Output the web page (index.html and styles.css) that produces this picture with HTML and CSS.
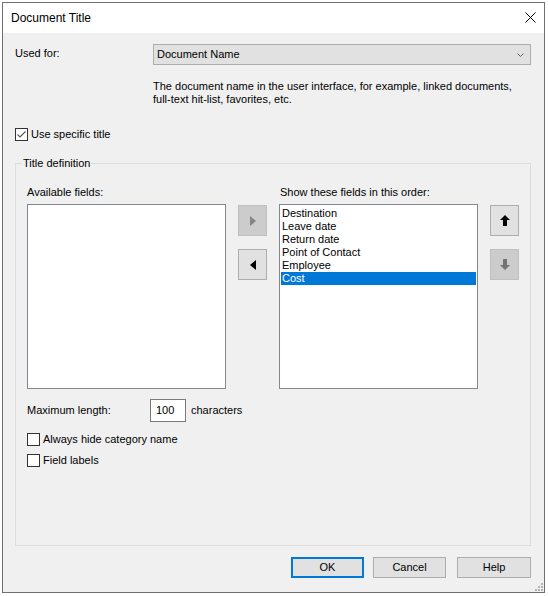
FILE: index.html
```html
<!DOCTYPE html>
<html lang="en">
<head>
<meta charset="utf-8">
<title>Document Title</title>
<link rel="stylesheet" href="styles.css">
</head>
<body>
<div class="window">
  <div class="titlebar">
    <span class="title">Document Title</span>
    <svg class="close" width="11" height="11" viewBox="0 0 11 11"><path d="M0.5 0.5 L10.5 10.5 M10.5 0.5 L0.5 10.5" stroke="#000" stroke-width="1" fill="none"/></svg>
  </div>
  <div class="body">
    <div class="row-used">
      <span class="label-used">Used for:</span>
      <div class="combo">
        <span>Document Name</span>
        <svg width="7" height="4" viewBox="0 0 7 4"><path d="M0.5 0.5 L3.5 3.5 L6.5 0.5" stroke="#606060" stroke-width="1" fill="none"/></svg>
      </div>
    </div>
    <p class="desc">The document name in the user interface, for example, linked documents, full-text hit-list, favorites, etc.</p>
    <label class="check check-top">
      <span class="box"><svg width="11" height="11" viewBox="0 0 11 11"><path d="M1.5 5.5 L4 8 L9.5 2.5" stroke="#555" stroke-width="1.1" fill="none"/></svg></span>
      <span>Use specific title</span>
    </label>
    <fieldset class="group">
      <legend>Title definition</legend>
      <div class="lists">
        <div class="col-label">Available fields:</div>
        <div class="col-label col-right">Show these fields in this order:</div>
        <div class="listbox"></div>
        <div class="btncol">
          <button class="sq disabled" type="button"><svg width="6" height="10" viewBox="0 0 6 10"><path d="M0 0 L6 5 L0 10 Z" fill="#858585"/></svg></button>
          <button class="sq" type="button"><svg width="6" height="10" viewBox="0 0 6 10"><path d="M6 0 L0 5 L6 10 Z" fill="#000"/></svg></button>
        </div>
        <ul class="listbox">
          <li>Destination</li>
          <li>Leave date</li>
          <li>Return date</li>
          <li>Point of Contact</li>
          <li>Employee</li>
          <li class="selected">Cost</li>
        </ul>
        <div class="btncol">
          <button class="sq" type="button"><svg width="10" height="11" viewBox="0 0 10 11"><path d="M5 0 L10 5 L7 5 L7 11 L3 11 L3 5 L0 5 Z" fill="#000"/></svg></button>
          <button class="sq disabled" type="button"><svg width="10" height="11" viewBox="0 0 10 11"><path d="M5 11 L10 6 L7 6 L7 0 L3 0 L3 6 L0 6 Z" fill="#737373"/></svg></button>
        </div>
      </div>
      <div class="maxrow">
        <span class="max-label">Maximum length:</span>
        <span class="input">100</span>
        <span class="unit">characters</span>
      </div>
      <label class="check check-a">
        <span class="box"></span>
        <span>Always hide category name</span>
      </label>
      <label class="check check-b">
        <span class="box"></span>
        <span>Field labels</span>
      </label>
    </fieldset>
    <div class="actions">
      <button class="btn default" type="button">OK</button>
      <button class="btn cancel" type="button">Cancel</button>
      <button class="btn help" type="button">Help</button>
    </div>
    <svg class="grip" width="9" height="8" viewBox="0 0 9 8">
      <rect x="7" y="0" width="2" height="2" fill="#b4b4b4"/>
      <rect x="4" y="3" width="2" height="2" fill="#b4b4b4"/>
      <rect x="7" y="3" width="2" height="2" fill="#b4b4b4"/>
      <rect x="1" y="6" width="2" height="2" fill="#b4b4b4"/>
      <rect x="4" y="6" width="2" height="2" fill="#b4b4b4"/>
      <rect x="7" y="6" width="2" height="2" fill="#b4b4b4"/>
    </svg>
  </div>
</div>
</body>
</html>
```
FILE: styles.css
```css
* { box-sizing: border-box; }
html, body { margin: 0; padding: 0; background: #ffffff; }
body {
  font-family: "Liberation Sans", Arial, sans-serif;
  font-size: 11px;
  line-height: 13px;
  color: #000;
}
.window {
  margin: 2px;
  width: 543px;
  height: 591px;
  border: 1px solid #707070;
  display: flex;
  flex-direction: column;
  background: #f0f0f0;
}
.titlebar {
  height: 30px;
  flex: none;
  background: #ffffff;
  display: flex;
  align-items: center;
  justify-content: space-between;
  padding: 0 8px 0 8px;
}
.title { font-size: 12px; line-height: 14px; }
.close { margin-bottom: 2px; }
.body {
  flex: 1;
  position: relative;
  display: flex;
  flex-direction: column;
  padding: 11px 13px 14px 12px;
}
.row-used { display: flex; align-items: flex-start; height: 21px; }
.label-used { width: 138px; padding-top: 3px; }
.combo {
  flex: 1;
  height: 21px;
  border: 1px solid #adadad;
  background: #e1e1e1;
  display: flex;
  align-items: center;
  justify-content: space-between;
  padding: 0 6px 0 3px;
}
.desc { margin: 15px 0 0 138px; line-height: 13px; }
.check { display: flex; align-items: center; height: 13px; }
.box {
  width: 13px;
  height: 13px;
  border: 1px solid #333333;
  background: #ffffff;
  display: flex;
  align-items: center;
  justify-content: center;
  margin-right: 3px;
}
.check-top { margin-top: 22px; }
.group {
  flex: 1;
  min-width: 0;
  min-height: 0;
  margin: 16px 0 0 0;
  padding: 16px 11px 0 11px;
  border: 1px solid #dcdcdc;
}
.group legend {
  padding: 0 1px;
  margin-left: -5px;
  line-height: 13px;
}
.lists {
  display: grid;
  grid-template-columns: 199px 29px 199px 29px;
  grid-template-rows: 13px 185px;
  column-gap: 12px;
  row-gap: 5px;
}
.col-label { grid-row: 1; grid-column: 1; white-space: nowrap; }
.col-label.col-right { grid-column: 3; padding-left: 1px; }
.listbox {
  grid-row: 2;
  margin: 0;
  padding: 2px 1px 1px 1px;
  list-style: none;
  border: 1px solid #828790;
  background: #ffffff;
}
.listbox li { height: 13px; line-height: 13px; padding-left: 1px; white-space: nowrap; }
.listbox li.selected { background: #0078d7; color: #ffffff; }
.btncol {
  grid-row: 2;
  display: flex;
  flex-direction: column;
  gap: 13px;
  padding-top: 1px;
}
.sq {
  width: 29px;
  height: 31px;
  padding: 0;
  margin: 0;
  border: 1px solid #adadad;
  background: #e1e1e1;
  display: flex;
  align-items: center;
  justify-content: center;
}
.sq.disabled { background: #cccccc; border-color: #bfbfbf; }
.maxrow { display: flex; align-items: center; height: 23px; margin-top: 10px; }
.max-label { width: 123px; }
.input {
  width: 36px;
  height: 23px;
  border: 1px solid #7a7a7a;
  background: #ffffff;
  padding-left: 5px;
  line-height: 21px;
}
.unit { margin-left: 5px; }
.check-a { margin-top: 11px; }
.check-b { margin-top: 8px; }
.actions {
  display: flex;
  justify-content: flex-end;
  margin-top: 11px;
  height: 21px;
}
.btn {
  width: 73px;
  height: 21px;
  margin: 0;
  padding: 0;
  border: 1px solid #adadad;
  background: #e1e1e1;
  font-family: "Liberation Sans", Arial, sans-serif;
  font-size: 11px;
  line-height: 13px;
  color: #000;
}
.btn.default { border: 2px solid #0078d7; }
.btn.cancel { margin-left: 9px; }
.btn.help { margin-left: 11px; width: 74px; }
.grip { position: absolute; right: 1px; bottom: 1px; }
```
